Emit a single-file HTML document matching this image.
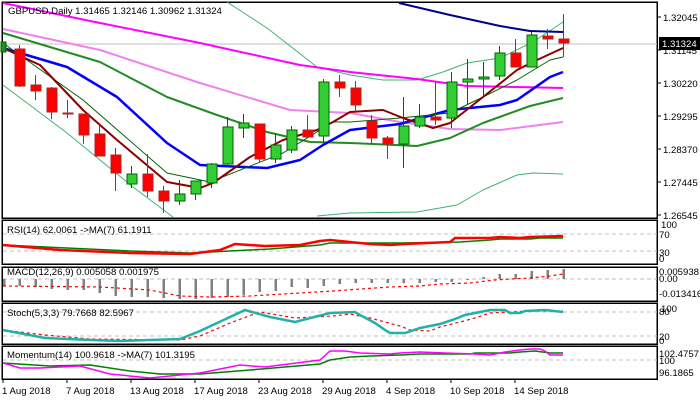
<!DOCTYPE html>
<html><head><meta charset="utf-8"><style>
html,body{margin:0;padding:0;background:#fff;width:700px;height:400px;overflow:hidden}
svg{display:block}
text{font-family:"Liberation Sans",sans-serif;font-size:9.6px;fill:#000}
</style></head><body>
<svg width="700" height="400" viewBox="0 0 700 400" xmlns="http://www.w3.org/2000/svg" shape-rendering="crispEdges">
<rect width="700" height="400" fill="#fff"/>
<g fill="none" stroke="#000" stroke-width="1.5">
<rect x="2" y="2" width="655" height="216"/>
<rect x="2" y="220" width="655" height="44"/>
<rect x="2" y="267" width="655" height="34"/>
<rect x="2" y="303" width="655" height="41"/>
<rect x="2" y="346" width="655" height="33"/>
</g>
<g fill="none" shape-rendering="auto" stroke-linejoin="round">
<line x1="3" y1="44" x2="657" y2="44" stroke="#c0c0c0" stroke-width="1"/>
<polyline stroke="#3cb371" stroke-width="1" points="227,2 267,28 317,67 350,75 383,80 417,80 443,72 467,63 500,58 533,42 563,22"/>
<polyline stroke="#3cb371" stroke-width="1" points="3,85 67,133 133,187 173,217"/>
<polyline stroke="#3cb371" stroke-width="1" points="317,216 350,213 417,212 457,205 483,190 517,175 533,173 563,174"/>
<polyline stroke="#00008b" stroke-width="2" points="399,3 450,15 500,26 530,31 563,32"/>
<polyline stroke="#ff00ff" stroke-width="2" points="3,3 100,23 200,43 300,65 350,72 417,79 467,86 517,87 563,88"/>
<polyline stroke="#ee82ee" stroke-width="2" points="3,29 100,50 200,83 290,110 350,113 400,122 450,129 500,130 563,122"/>
<polyline stroke="#228b22" stroke-width="2" points="3,33 100,62 167,97 217,115 267,132 310,142 350,143 417,146 450,138 483,123 530,106 563,98"/>
<polyline stroke="#0000ff" stroke-width="2.5" points="3,48 67,67 117,97 167,143 200,165 267,168 300,160 323,145 350,130 400,124 450,110 500,105 517,100 550,77 563,72"/>
<polyline stroke="#006400" stroke-width="1" points="3,43 83,100 167,173 210,182 283,153 333,122 350,122 400,118 450,113 483,97 517,80 550,60 563,57"/>
<polyline stroke="#8b0000" stroke-width="2" points="3,48 40,65 83,110 117,140 167,182 200,188 213,183 250,157 283,140 317,130 333,122 350,112 383,110 403,118 433,128 450,123 483,97 517,70 537,60 563,48"/>
</g>
<g stroke-width="1">
<g stroke="#b22222" fill="#ff0000">
<line x1="19.5" y1="45" x2="19.5" y2="87"/><rect x="15" y="49" width="10" height="37"/>
<line x1="35.5" y1="75" x2="35.5" y2="100"/><rect x="31" y="85" width="10" height="6"/>
<line x1="51.5" y1="87" x2="51.5" y2="119"/><rect x="47" y="88" width="10" height="24"/>
<line x1="67.5" y1="100" x2="67.5" y2="118"/><rect x="63" y="113" width="10" height="1"/>
<line x1="83.5" y1="114" x2="83.5" y2="144"/><rect x="79" y="114" width="10" height="21"/>
<line x1="99.5" y1="123" x2="99.5" y2="156"/><rect x="95" y="134" width="10" height="22"/>
<line x1="115.5" y1="148" x2="115.5" y2="191"/><rect x="111" y="155" width="10" height="18"/>
<line x1="147.5" y1="154" x2="147.5" y2="197"/><rect x="143" y="174" width="10" height="17"/>
<line x1="163.5" y1="186" x2="163.5" y2="213"/><rect x="159" y="191" width="10" height="10"/>
<line x1="259.5" y1="124" x2="259.5" y2="162"/><rect x="255" y="124" width="10" height="35"/>
<line x1="307.5" y1="115" x2="307.5" y2="137"/><rect x="303" y="130" width="10" height="7"/>
<line x1="339.5" y1="75" x2="339.5" y2="97"/><rect x="335" y="82" width="10" height="6"/>
<line x1="355.5" y1="81" x2="355.5" y2="112"/><rect x="351" y="88" width="10" height="17"/>
<line x1="371.5" y1="115" x2="371.5" y2="144"/><rect x="367" y="121" width="10" height="17"/>
<line x1="387.5" y1="136" x2="387.5" y2="159"/><rect x="383" y="138" width="10" height="6"/>
<line x1="435.5" y1="82" x2="435.5" y2="125"/><rect x="431" y="117" width="10" height="3"/>
<line x1="515.5" y1="39" x2="515.5" y2="67"/><rect x="511" y="53" width="10" height="14"/>
<line x1="547.5" y1="29" x2="547.5" y2="49"/><rect x="543" y="36" width="10" height="3"/>
<line x1="563.5" y1="14" x2="563.5" y2="57"/><rect x="559" y="39" width="10" height="4"/>
</g>
<g stroke="#006400" fill="#32cd32">
<rect x="1" y="42" width="5" height="10" fill="#228b22"/>
<line x1="131.5" y1="166" x2="131.5" y2="188"/><rect x="127" y="174" width="10" height="10"/>
<line x1="179.5" y1="180" x2="179.5" y2="205"/><rect x="175" y="194" width="10" height="7"/>
<line x1="195.5" y1="181" x2="195.5" y2="200"/><rect x="191" y="181" width="10" height="13"/>
<line x1="211.5" y1="163" x2="211.5" y2="188"/><rect x="207" y="164" width="10" height="19"/>
<line x1="227.5" y1="117" x2="227.5" y2="167"/><rect x="223" y="127" width="10" height="37"/>
<line x1="243.5" y1="114" x2="243.5" y2="138"/><rect x="239" y="123" width="10" height="5"/>
<line x1="275.5" y1="133" x2="275.5" y2="163"/><rect x="271" y="145" width="10" height="14"/>
<line x1="291.5" y1="126" x2="291.5" y2="153"/><rect x="287" y="130" width="10" height="20"/>
<line x1="323.5" y1="79" x2="323.5" y2="142"/><rect x="319" y="82" width="10" height="54"/>
<line x1="403.5" y1="97" x2="403.5" y2="168"/><rect x="399" y="126" width="10" height="18"/>
<line x1="419.5" y1="104" x2="419.5" y2="128"/><rect x="415" y="117" width="10" height="9"/>
<line x1="451.5" y1="72" x2="451.5" y2="128"/><rect x="447" y="82" width="10" height="36"/>
<line x1="467.5" y1="59" x2="467.5" y2="105"/><rect x="463" y="79" width="10" height="3"/>
<line x1="483.5" y1="62" x2="483.5" y2="98"/><rect x="479" y="77" width="10" height="2"/>
<line x1="499.5" y1="46" x2="499.5" y2="80"/><rect x="495" y="53" width="10" height="23"/>
<line x1="531.5" y1="32" x2="531.5" y2="67"/><rect x="527" y="35" width="10" height="32"/>
</g>
</g>
<text x="8" y="14">GBPUSD,Daily  1.31465 1.32146 1.30962 1.31324</text>
<g stroke="#000"><line x1="657" y1="17" x2="661" y2="17"/><line x1="657" y1="50" x2="661" y2="50"/><line x1="657" y1="83" x2="661" y2="83"/><line x1="657" y1="116" x2="661" y2="116"/><line x1="657" y1="149" x2="661" y2="149"/><line x1="657" y1="182" x2="661" y2="182"/><line x1="657" y1="215" x2="661" y2="215"/></g>
<text x="663" y="21">1.32045</text>
<text x="663" y="54">1.31145</text>
<text x="663" y="87">1.30220</text>
<text x="663" y="120">1.29295</text>
<text x="663" y="153">1.28370</text>
<text x="663" y="186">1.27445</text>
<text x="663" y="219">1.26545</text>
<rect x="659" y="37" width="41" height="13" fill="#000"/>
<text x="662" y="47" style="fill:#fff">1.31324</text>
<g stroke="#c0c0c0" stroke-dasharray="4,3">
<line x1="3" y1="234" x2="657" y2="234"/><line x1="3" y1="251" x2="657" y2="251"/>
<line x1="3" y1="279" x2="657" y2="279"/>
<line x1="3" y1="312" x2="657" y2="312"/><line x1="3" y1="336" x2="657" y2="336"/>
<line x1="3" y1="360" x2="657" y2="360"/>
</g>
<g fill="none" shape-rendering="auto">
<polyline stroke="#008000" stroke-width="1.5" points="3,245 130,251 190,253 230,251 270,249 320,245 330,243 400,243 460,242 490,240 500,239 530,239 540,238 563,238"/>
<polyline stroke="#ff0000" stroke-width="2.5" points="3,245 60,250 130,253 190,254 220,250 235,244 265,246 300,245 320,241 330,240 350,242 370,244 390,245 405,244 450,242 455,238 490,238 500,237 520,238 530,237 563,236"/>
<g stroke="#808080" stroke-width="2.5" shape-rendering="crispEdges">
<line x1="4" y1="279" x2="4" y2="286"/><line x1="19.5" y1="279" x2="19.5" y2="286"/><line x1="35.5" y1="279" x2="35.5" y2="287"/><line x1="51.5" y1="279" x2="51.5" y2="289"/><line x1="67.5" y1="279" x2="67.5" y2="290"/><line x1="83.5" y1="279" x2="83.5" y2="290"/><line x1="99.5" y1="279" x2="99.5" y2="293"/><line x1="115.5" y1="279" x2="115.5" y2="296"/><line x1="131.5" y1="279" x2="131.5" y2="297"/><line x1="147.5" y1="279" x2="147.5" y2="297"/><line x1="163.5" y1="279" x2="163.5" y2="298"/><line x1="179.5" y1="279" x2="179.5" y2="299"/><line x1="195.5" y1="279" x2="195.5" y2="299"/><line x1="211.5" y1="279" x2="211.5" y2="298"/><line x1="227.5" y1="279" x2="227.5" y2="297"/><line x1="243.5" y1="279" x2="243.5" y2="295"/><line x1="259.5" y1="279" x2="259.5" y2="292"/><line x1="275.5" y1="279" x2="275.5" y2="291"/><line x1="291.5" y1="279" x2="291.5" y2="287"/><line x1="307.5" y1="279" x2="307.5" y2="288"/><line x1="323.5" y1="279" x2="323.5" y2="286"/><line x1="339.5" y1="279" x2="339.5" y2="284"/><line x1="355.5" y1="279" x2="355.5" y2="283"/><line x1="371.5" y1="279" x2="371.5" y2="283"/><line x1="387.5" y1="279" x2="387.5" y2="283"/><line x1="403.5" y1="279" x2="403.5" y2="283"/><line x1="419.5" y1="279" x2="419.5" y2="283"/><line x1="435.5" y1="279" x2="435.5" y2="282"/><line x1="451.5" y1="279" x2="451.5" y2="282"/><line x1="467.5" y1="279" x2="467.5" y2="280"/><line x1="483.5" y1="277" x2="483.5" y2="279"/><line x1="499.5" y1="274" x2="499.5" y2="279"/><line x1="515.5" y1="274" x2="515.5" y2="279"/><line x1="531.5" y1="271" x2="531.5" y2="279"/><line x1="547.5" y1="270" x2="547.5" y2="279"/><line x1="563.5" y1="269" x2="563.5" y2="279"/>
</g>
<polyline stroke="#ff0000" stroke-width="1.2" stroke-dasharray="3,3" points="3,286 100,287 150,290 180,296 210,297 250,296 300,293 333,291 360,289 390,287 420,286 440,284 470,283 495,280 510,279 530,278 550,276 563,274"/>
<polyline stroke="#ff0000" stroke-width="1.2" stroke-dasharray="3,3" points="3,330 45,335 90,339 180,340 200,336 230,323 260,312 295,318 333,316 350,314 370,318 400,326 410,330 430,331 440,327 460,322 475,318 490,313 510,312 530,311 563,311"/>
<polyline stroke="#20b2aa" stroke-width="2.5" points="3,330 45,338 90,340 120,341 180,339 200,331 230,317 245,310 270,317 295,322 330,313 355,312 360,315 375,323 385,330 390,333 405,333 420,328 440,324 455,319 465,315 480,312 490,310 505,310 510,313 520,313 525,311 545,310 563,312"/>
<polyline stroke="#008000" stroke-width="1.5" points="3,363 50,366 90,365 130,371 160,374 200,374 250,370 320,364 330,360 350,357 370,356 400,355 420,354 470,354 475,353 510,353 520,352 535,351 550,353 563,353"/>
<polyline stroke="#ff00ff" stroke-width="1.5" points="3,363 20,368 40,368 80,366 110,374 150,378 200,373 240,365 265,367 320,360 330,351 345,351 360,353 390,354 400,353 420,352 445,353 475,354 490,355 505,352 520,350 530,349 540,349 545,351 550,355 563,355"/>
</g>
<text x="7" y="233">RSI(14) 62.0061  -&gt;MA(7) 61.1911</text>
<text x="7" y="275">MACD(12,26,9) 0.005058 0.001975</text>
<text x="7" y="316">Stoch(5,3,3) 79.7668 82.5967</text>
<text x="7" y="358">Momentum(14) 100.9618  -&gt;MA(7) 101.3195</text>
<g style="font-size:9.3px">
<text x="661" y="228">100</text><text x="659" y="238">70</text><text x="659" y="256">30</text><text x="659" y="262">0</text>
<text x="659" y="275">0.005938</text><text x="659" y="282">0.00</text><text x="659" y="297">-0.013416</text>
<text x="661" y="312">100</text><text x="659" y="315">80</text><text x="659" y="340">20</text><text x="659" y="344">0</text>
<text x="659" y="357">102.4757</text><text x="659" y="364">100</text><text x="659" y="376">96.1865</text>
</g>
<g stroke="#000"><line x1="3" y1="379" x2="3" y2="383"/><line x1="67" y1="379" x2="67" y2="383"/><line x1="131" y1="379" x2="131" y2="383"/><line x1="195" y1="379" x2="195" y2="383"/><line x1="259" y1="379" x2="259" y2="383"/><line x1="323" y1="379" x2="323" y2="383"/><line x1="387" y1="379" x2="387" y2="383"/><line x1="451" y1="379" x2="451" y2="383"/><line x1="515" y1="379" x2="515" y2="383"/></g>
<text x="2" y="394">1 Aug 2018</text>
<text x="66" y="394">7 Aug 2018</text>
<text x="130" y="394">13 Aug 2018</text>
<text x="194" y="394">17 Aug 2018</text>
<text x="258" y="394">23 Aug 2018</text>
<text x="322" y="394">29 Aug 2018</text>
<text x="386" y="394">4 Sep 2018</text>
<text x="450" y="394">10 Sep 2018</text>
<text x="514" y="394">14 Sep 2018</text>
</svg>
</body></html>
